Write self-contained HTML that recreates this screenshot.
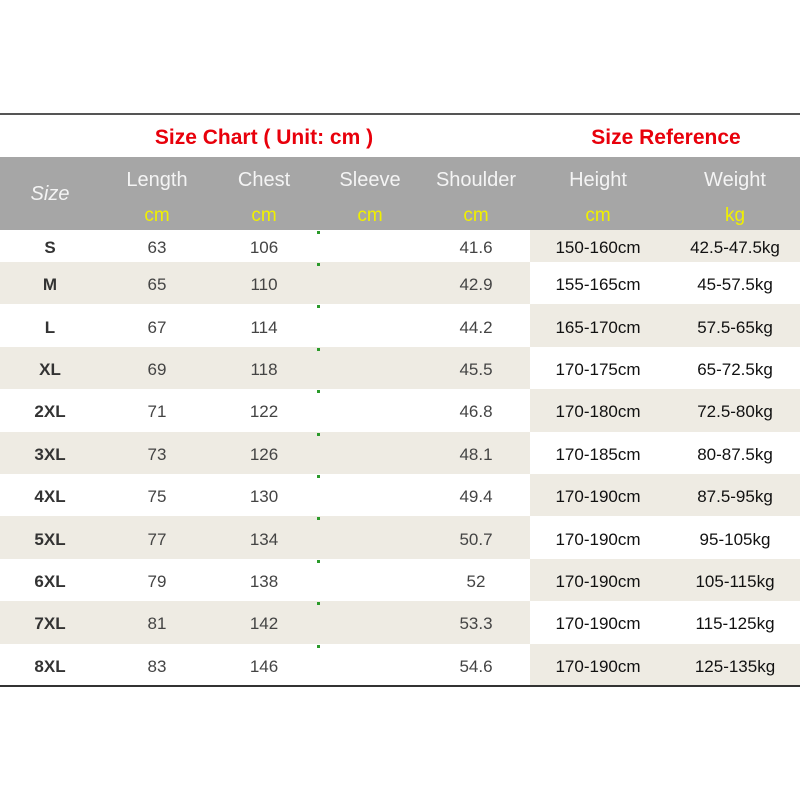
<!DOCTYPE html>
<html><head><style>
body{margin:0;width:800px;height:800px;background:#fff;position:relative;overflow:hidden;font-family:"Liberation Sans",Arial,sans-serif}
.a{position:absolute}
.t{position:absolute;text-align:center;transform:translateX(-50%);white-space:nowrap}
.h{color:#f4f4f4;font-size:20px}
.u{color:#f0f000;font-size:19px}
.row{position:absolute;left:0;width:800px;height:42.4px}
.row span{position:absolute;top:calc(50% + 2px);transform:translate(-50%,-50%);white-space:nowrap;font-size:17px}
.row .s{color:#333;font-weight:bold;font-size:17px}
.row .d{color:#444}
.row .r{color:#111}
.bl{position:absolute;left:0;top:0;width:530px;height:100%;background:#eeebe3}
.br{position:absolute;left:530px;top:0;width:270px;height:100%;background:#eeebe3}
.g{position:absolute;left:317px;top:1px;width:3px;height:3px;background:#2a9a2a}
</style></head><body>
<div class="a" style="left:0;top:113px;width:800px;height:2px;background:#555"></div>
<div class="t" style="left:264px;top:126px;color:#e8000b;font-size:21px;font-weight:bold">Size Chart&nbsp;( Unit: cm )</div>
<div class="t" style="left:666px;top:126px;color:#e8000b;font-size:21px;font-weight:bold">Size Reference</div>
<div class="a" style="left:0;top:157px;width:800px;height:73px;background:#a6a6a6"></div>
<div class="t h" style="left:50px;top:183px;font-style:italic">Size</div>
<div class="t h" style="left:157px;top:169px">Length</div>
<div class="t h" style="left:264px;top:169px">Chest</div>
<div class="t h" style="left:370px;top:169px">Sleeve</div>
<div class="t h" style="left:476px;top:169px">Shoulder</div>
<div class="t h" style="left:598px;top:169px">Height</div>
<div class="t h" style="left:735px;top:169px">Weight</div>
<div class="t u" style="left:157px;top:205px">cm</div>
<div class="t u" style="left:264px;top:205px">cm</div>
<div class="t u" style="left:370px;top:205px">cm</div>
<div class="t u" style="left:476px;top:205px">cm</div>
<div class="t u" style="left:598px;top:205px">cm</div>
<div class="t u" style="left:735px;top:205px">kg</div>

<div class="row" style="top:230px;height:32px"><div class="br"></div><div class="g"></div><span class="s" style="left:50px">S</span><span class="d" style="left:157px">63</span><span class="d" style="left:264px">106</span><span class="d" style="left:476px">41.6</span><span class="r" style="left:598px">150-160cm</span><span class="r" style="left:735px">42.5-47.5kg</span></div>
<div class="row" style="top:262px"><div class="bl"></div><div class="g"></div><span class="s" style="left:50px">M</span><span class="d" style="left:157px">65</span><span class="d" style="left:264px">110</span><span class="d" style="left:476px">42.9</span><span class="r" style="left:598px">155-165cm</span><span class="r" style="left:735px">45-57.5kg</span></div>
<div class="row" style="top:304.4px"><div class="br"></div><div class="g"></div><span class="s" style="left:50px">L</span><span class="d" style="left:157px">67</span><span class="d" style="left:264px">114</span><span class="d" style="left:476px">44.2</span><span class="r" style="left:598px">165-170cm</span><span class="r" style="left:735px">57.5-65kg</span></div>
<div class="row" style="top:346.8px"><div class="bl"></div><div class="g"></div><span class="s" style="left:50px">XL</span><span class="d" style="left:157px">69</span><span class="d" style="left:264px">118</span><span class="d" style="left:476px">45.5</span><span class="r" style="left:598px">170-175cm</span><span class="r" style="left:735px">65-72.5kg</span></div>
<div class="row" style="top:389.2px"><div class="br"></div><div class="g"></div><span class="s" style="left:50px">2XL</span><span class="d" style="left:157px">71</span><span class="d" style="left:264px">122</span><span class="d" style="left:476px">46.8</span><span class="r" style="left:598px">170-180cm</span><span class="r" style="left:735px">72.5-80kg</span></div>
<div class="row" style="top:431.6px"><div class="bl"></div><div class="g"></div><span class="s" style="left:50px">3XL</span><span class="d" style="left:157px">73</span><span class="d" style="left:264px">126</span><span class="d" style="left:476px">48.1</span><span class="r" style="left:598px">170-185cm</span><span class="r" style="left:735px">80-87.5kg</span></div>
<div class="row" style="top:474px"><div class="br"></div><div class="g"></div><span class="s" style="left:50px">4XL</span><span class="d" style="left:157px">75</span><span class="d" style="left:264px">130</span><span class="d" style="left:476px">49.4</span><span class="r" style="left:598px">170-190cm</span><span class="r" style="left:735px">87.5-95kg</span></div>
<div class="row" style="top:516.4px"><div class="bl"></div><div class="g"></div><span class="s" style="left:50px">5XL</span><span class="d" style="left:157px">77</span><span class="d" style="left:264px">134</span><span class="d" style="left:476px">50.7</span><span class="r" style="left:598px">170-190cm</span><span class="r" style="left:735px">95-105kg</span></div>
<div class="row" style="top:558.8px"><div class="br"></div><div class="g"></div><span class="s" style="left:50px">6XL</span><span class="d" style="left:157px">79</span><span class="d" style="left:264px">138</span><span class="d" style="left:476px">52</span><span class="r" style="left:598px">170-190cm</span><span class="r" style="left:735px">105-115kg</span></div>
<div class="row" style="top:601.2px"><div class="bl"></div><div class="g"></div><span class="s" style="left:50px">7XL</span><span class="d" style="left:157px">81</span><span class="d" style="left:264px">142</span><span class="d" style="left:476px">53.3</span><span class="r" style="left:598px">170-190cm</span><span class="r" style="left:735px">115-125kg</span></div>
<div class="row" style="top:643.6px"><div class="br"></div><div class="g"></div><span class="s" style="left:50px">8XL</span><span class="d" style="left:157px">83</span><span class="d" style="left:264px">146</span><span class="d" style="left:476px">54.6</span><span class="r" style="left:598px">170-190cm</span><span class="r" style="left:735px">125-135kg</span></div>

<div class="a" style="left:0;top:685px;width:800px;height:2px;background:#333"></div>
</body></html>
